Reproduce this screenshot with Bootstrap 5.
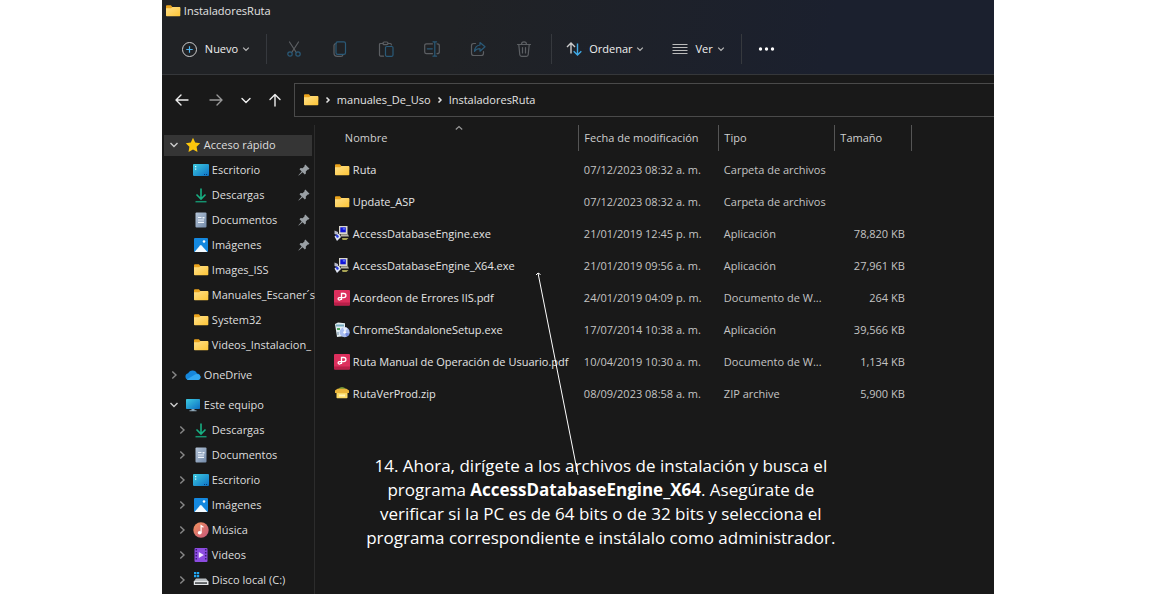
<!DOCTYPE html>
<html lang="es">
<head>
<meta charset="utf-8">
<meta name="viewport" content="width=device-width, initial-scale=1">
<title>InstaladoresRuta</title>
<link href="https://cdn.jsdelivr.net/npm/bootstrap@5.3.0/dist/css/bootstrap.min.css" rel="stylesheet">
<style>
  body { background: #fff; font-family: "Open Sans", "Noto Sans", sans-serif; }
  .explorer { width: 72%; background: #191919; color: #e4e4e4; font-size: 11px; line-height: 16px; }
  .explorer svg { display: block; flex: none; }
  .ic { width: 16px; height: 16px; }
  .chev { width: 8px; height: 8px; fill: none; stroke: currentColor; stroke-width: 1.2; }
  .bare { background: none; border: 0; padding: 0; color: inherit; display: flex; align-items: center; justify-content: center; }

  .top-area { background: linear-gradient(100deg, #202225 35%, #1b202e 80%); border-bottom: 1px solid #35373a; }
  .caption-bar { height: 22px; padding-left: 3px; gap: 3px; }
  .commands { height: 52px; padding: 2px 0 0 5px; }
  .commands .bare { height: 32px; }
  .tool-group { margin: 0 4px; }
  .tool { width: 46px; }
  .tool svg, .nav-btn svg { fill: none; stroke: #5c5f63; stroke-width: 1.2; stroke-linecap: round; stroke-linejoin: round; }
  .tool .blue { stroke: #2a5a78; }
  .split { width: 1px; height: 30px; background: #36393e; }
  .menu-btn { color: #f0f0f0; gap: 4px; margin-left: 14px; }
  .menu-btn + .menu-btn { margin-left: 28px; }
  .menu-btn svg:first-child { margin-right: 3px; }
  .menu-btn .chev { color: #bbb; }

  .address-row { height: 50px; padding-top: 8px; }
  .history { gap: 12px; padding: 0 4px 8px 12px; }
  .history .first { margin-right: 6px; }
  .nav-btn svg { stroke: #eee; stroke-width: 1.4; }
  .nav-btn.dim svg { stroke: #999; }
  .path-box { border: 1px solid #4a4a4a; border-right: 0; height: 34px; padding-left: 8px; gap: 5px; }
  .path-box .chev { stroke-width: 1.5; }
  .path-box a, .tree a { color: inherit; text-decoration: none; }

  .tree { width: 153px; flex: none; border-right: 1px solid #2c2c2c; padding: 8px 2px 0; }
  .tree ul { list-style: none; padding: 0; margin: 0; }
  .tree-group { margin-bottom: 6px; }
  .tree-row { height: 24px; display: flex; align-items: center; padding-left: 1px; color: #dedede; }
  .tree-row .bare { width: 18px; height: 20px; color: #888; flex: none; }
  .tree-row .bare.open { color: #ccc; }
  .tree-row .chev { stroke-width: 1.4; }
  .tree-row a { display: flex; align-items: center; gap: 3px; min-width: 0; flex: 1; margin-left: 2px; white-space: nowrap; }
  .tree-row.active { background: linear-gradient(#353535, #353535) center / 100% 21px no-repeat; }
  .tree ul .tree-row { height: 25px; padding-left: 9px; }
  .tree ul .leaf { padding-left: 27px; }
  .pin { width: 12px; height: 12px; fill: #9aa0a5; margin-right: 2px; }

  .file-list { table-layout: fixed; width: 100%; border-collapse: collapse; color: #c4c4c4; }
  .file-list th { font-weight: 400; height: 26px; padding: 0 5px; border-right: 1px solid #555; color: #cfcfcf; }
  .file-list th:last-child { border: 0; }
  .file-list th:first-child { padding-left: 30px; }
  .file-list tbody::before { content: ""; display: block; height: 3px; }
  .file-list td { height: 32px; padding: 0 7px 0 5px; white-space: nowrap; }
  .file-list td:first-child { padding: 0 0 0 19px; color: #e4e4e4; }
  .file-name { gap: 3px; }
  .file-list .size-cell { text-align: right; }
  .sort-mark { top: -1px; left: 140px; color: #999; }
  .c-name { width: 264px; } .c-date { width: 140px; } .c-type { width: 116px; } .c-size { width: 77px; }

  .callout-text { font-size: 17px; line-height: 24px; color: #fff; width: 484px; max-width: 100%; margin: 44px 0 0 44px; text-align: center; }
  .pointer { left: 219px; top: 147px; width: 48px; height: 206px; pointer-events: none; }
</style>
</head>
<body>
<svg width="0" height="0" class="position-absolute" aria-hidden="true">
  <defs>
    <linearGradient id="gFolder" x1="0" y1="0" x2="1" y2="1"><stop offset="0" stop-color="#ffe08a"/><stop offset="1" stop-color="#fdc536"/></linearGradient>
    <linearGradient id="gDesk" x1="0" y1="0" x2="1" y2="1"><stop offset="0" stop-color="#3ecbe0"/><stop offset="1" stop-color="#0c6fc4"/></linearGradient>
    <linearGradient id="gMusic" x1="0" y1="0" x2="1" y2="1"><stop offset="0" stop-color="#f2935c"/><stop offset="1" stop-color="#c4557c"/></linearGradient>
    <linearGradient id="gDoc" x1="0" y1="0" x2="1" y2="1"><stop offset="0" stop-color="#b5c5d8"/><stop offset="1" stop-color="#7289a8"/></linearGradient>
    <symbol id="folder" viewBox="0 0 16 16"><path d="M1 3.2q0-.9.9-.9h4l1.5 1.6h7q.8 0 .8.8V8H1z" fill="#eaa31c"/><path d="M1 5.2h5.2l1.3-1.1h7q.8 0 .8.8v7.500q0 .8-.8.8H1.800q-.8 0-.8-.8z" fill="url(#gFolder)"/></symbol>
    <symbol id="star" viewBox="0 0 16 16"><path d="M8 .8l2.200 4.700 5 .7-3.600 3.600.9 5.200L8 12.500 3.500 15l.9-5.200L.8 6.200l5-.7z" fill="#fdc70c"/></symbol>
    <symbol id="desk" viewBox="0 0 16 16"><rect x="0" y="2" width="16" height="12" rx="1" fill="url(#gDesk)"/><path d="M2 4h1.300v1.300H2zM2 6.500h1.300v1.300H2z" fill="#d6fbff"/><path d="M11 12h1v1h-1zM13 12h1v1h-1z" fill="#063c76"/></symbol>
    <symbol id="down" viewBox="0 0 16 16"><path d="M8 1.500v10M3.500 7.500L8 12l4.500-4.500" fill="none" stroke="#17b083" stroke-width="1.600"/><path d="M2.500 14.700h11" stroke="#15926f" stroke-width="1.500"/></symbol>
    <symbol id="doc" viewBox="0 0 16 16"><rect x="2.500" y=".5" width="11" height="15" rx="1" fill="url(#gDoc)"/><path d="M5 5.500h3.500M5 8h6M5 10.300h6" stroke="#eef4fb" stroke-width="1.200"/><path d="M9.500 5h2v1.500h-2z" fill="#eef4fb"/></symbol>
    <symbol id="pic" viewBox="0 0 16 16"><rect x="1" y="1" width="14" height="14" rx="1" fill="#1488df"/><path d="M1.500 15l5.500-6.500q.8-.8 1.600 0l5.800 6.500z" fill="#f4fbff"/><circle cx="11" cy="4.500" r="1.300" fill="#fff"/></symbol>
    <symbol id="cloud" viewBox="0 0 16 16"><path d="M3.500 13a3.400 3.400 0 0 1-.4-6.700A4.800 4.800 0 0 1 12 6.500a3.300 3.300 0 0 1 .8 6.500z" fill="#1687db"/><path d="M3.500 13a3 3 0 0 1-1.700-.6L10 7.500a4 4 0 0 1 5.600 2.300A3 3 0 0 1 12.800 13z" fill="#32a7f0"/></symbol>
    <symbol id="pc" viewBox="0 0 16 16"><rect x="1" y="2" width="14" height="10" rx=".7" fill="url(#gDesk)"/><path d="M6.500 12h3v1.500h-3zM4.500 13.300h7v1h-7z" fill="#8ea7b8"/></symbol>
    <symbol id="music" viewBox="0 0 16 16"><circle cx="8" cy="8" r="7.700" fill="url(#gMusic)"/><ellipse cx="6.700" cy="10.700" rx="2" ry="1.700" fill="#fff"/><path d="M8.100 10.700V3.700l2.400 1.500" stroke="#fff" stroke-width="1.200" fill="none"/></symbol>
    <symbol id="video" viewBox="0 0 16 16"><rect x="1.500" y="1" width="13" height="14" rx="1" fill="#8c4be0"/><path d="M3.300 2v12M12.700 2v12" stroke="#3d1b7e" stroke-width="1.500" stroke-dasharray="1.600 1.400"/><path d="M5.800 5l5 3-5 3z" fill="#f1e6ff"/></symbol>
    <symbol id="disk" viewBox="0 0 16 16"><path d="M3 6.500h10l2.500 3H.8z" fill="#b9bec2"/><rect x=".8" y="9" width="14.700" height="4" rx=".6" fill="#e4e6e8"/><path d="M2 10.300h12v1.500H2z" fill="#3c4043"/><path d="M1 0h2.300v2.300H1zM3.900 0h2.300v2.300H3.900zM1 2.900h2.300v2.300H1zM3.900 2.900h2.300v2.300H3.900z" fill="#22a7f2"/></symbol>
    <symbol id="exe" viewBox="0 0 16 16"><path d="M5 0h8.500v8H5z" fill="#d9d6cb"/><path d="M6.300 1.300h5.500v5H6.300z" fill="#1014d8"/><path d="M8.800 1.700h2.300v2H8.800z" fill="#5468f5"/><path d="M6.500 8.300h7.500l1 2.200H7z" fill="#b9b6a8"/><path d="M.5 4.500l3.500 1.500v3l-3.500-1z" fill="#b8bac8"/><path d="M.5 10.500L5 7.500l2 3.500-4 4z" fill="#dfe4f3"/><path d="M1 8.500l3 .5 1 2-2 1z" fill="#2a3ede"/><path d="M8 12h6.500l-2 2H8.500z" fill="#a9a454"/></symbol>
    <symbol id="pdf" viewBox="0 0 16 16"><rect width="16" height="15.500" rx="1" fill="#dd2f5d"/><path d="M0 12.500h16v2q0 1-1 1H1q-1 0-1-1z" fill="#b91f49"/><path d="M7.500 10V3.500h2.300a2 2 0 0 1 0 4.200H5.300a1.200 1.200 0 1 0 1.200 1.300" fill="none" stroke="#fff" stroke-width="1.300"/></symbol>
    <symbol id="setup" viewBox="0 0 16 16"><path d="M1 2l3-1.500 7 .8V14l-8 1z" fill="#e2edf2"/><path d="M2 2.500h8v2H2z" fill="#76aac0"/><path d="M3 6h3v2H3z" fill="#4fa35d"/><path d="M3 10h2v3H3z" fill="#a8bccb"/><circle cx="10.700" cy="10.300" r="5" fill="#a9bdf0"/><path d="M10.700 10.300L9 5.600a5 5 0 0 1 4.500.6z" fill="#e9effd"/><path d="M10.700 10.300l4.700 1.500a5 5 0 0 1-3 3z" fill="#7389dd"/><circle cx="10.700" cy="10.300" r="1.400" fill="#f7f9ff"/></symbol>
    <symbol id="zip" viewBox="0 0 16 16"><path d="M4 3q4-4 8 0l1 2H3z" fill="#6f9436"/><path d="M1 4.500l2.500-1.700h9L15 4.500V7H1z" fill="#e9b43a"/><path d="M2.500 7h11v4.500q0 .8-.8.8H3.300q-.8 0-.8-.8z" fill="#fad965"/><path d="M5 8.500h6v2H5z" fill="#fff3b4"/></symbol>
    <symbol id="pinned" viewBox="0 0 12 12"><path d="M7.300.5l4.200 4.200-1 .8-.7-.1-2 2 .1 2-1.100 1.100L4.600 8.300.8 11.600l-.4-.4L3.700 7.400 1.500 5.200l1.100-1.100 2 .1 2-2-.1-.7z"/></symbol>
    <symbol id="v" viewBox="0 0 8 8"><path d="M1.200 2.700L4 5.500l2.800-2.800"/></symbol>
    <symbol id="vwide" viewBox="0 0 8 8"><path d="M.5 2L4 5.500 7.500 2"/></symbol>
    <symbol id="r" viewBox="0 0 8 8"><path d="M2.300.5L6 4 2.300 7.500"/></symbol>
    <symbol id="rsmall" viewBox="0 0 8 8"><path d="M2.500 1.500L5 4 2.500 6.500"/></symbol>
  </defs>
</svg>

<main class="explorer mx-auto min-vh-100 d-flex flex-column overflow-hidden">
  <header class="top-area">
    <div class="caption-bar d-flex align-items-center"><svg class="ic"><use href="#folder"/></svg><span>InstaladoresRuta</span></div>
    <div class="commands d-flex align-items-center">
      <button class="bare menu-btn" type="button"><svg width="17" height="17" viewBox="0 0 17 17" fill="none"><circle cx="8.500" cy="8.500" r="7" stroke="#ccc"/><path d="M8.500 5.300v6.400M5.300 8.500h6.400" stroke="#52b5f0" stroke-width="1.200"/></svg>Nuevo<svg class="chev"><use href="#v"/></svg></button>
      <span class="split ms-3"></span>
      <div class="tool-group d-flex">
        <button class="bare tool" type="button" aria-label="Cortar"><svg width="16" height="16" viewBox="0 0 16 16"><path d="M3.500 1l6.800 10.500M12.500 1L5.700 11.500"/><circle class="blue" cx="4" cy="13" r="2.200"/><circle class="blue" cx="12" cy="13" r="2.200"/></svg></button>
        <button class="bare tool" type="button" aria-label="Copiar"><svg width="16" height="16" viewBox="0 0 16 16"><path d="M4 2.500q-2 .3-2 2V12q0 3.300 3.300 3.300H9q1.700 0 2-1.700"/><rect class="blue" x="4" y=".8" width="9.500" height="12.500" rx="1.600"/></svg></button>
        <button class="bare tool" type="button" aria-label="Pegar"><svg width="16" height="16" viewBox="0 0 16 16"><path d="M5 2.500H2.500q-1 0-1 1V14q0 1.200 1.200 1.200H5.500M10 2.500h2.500q.8 0 .8 1V4"/><rect x="5" y="1" width="5" height="2.700" rx="1.200"/><rect class="blue" x="7.500" y="5.500" width="7.500" height="9.800" rx="1.200"/></svg></button>
        <button class="bare tool" type="button" aria-label="Cambiar nombre"><svg width="16" height="16" viewBox="0 0 16 16"><path d="M8.500 2.800h-6Q.7 2.800.7 4.500v6.500q0 1.700 1.800 1.700h6M13 2.800q2.300 0 2.300 1.700v6.500q0 1.700-2.300 1.700"/><path class="blue" d="M10.800.8v14.400M9 .8h3.600M9 15.200h3.600M3.300 7.800h5"/></svg></button>
        <button class="bare tool" type="button" aria-label="Compartir"><svg width="16" height="16" viewBox="0 0 16 16"><path d="M5.500 2.500H3.800q-2.300 0-2.300 2.200v7.500q0 2.300 2.300 2.300h7.400q2.300 0 2.300-2.300v-1.500"/><path class="blue" d="M10 1.500l5 4.300-5 4.400V7.700q-3.700 0-5.500 2.700Q5 4.500 10 4z"/></svg></button>
        <button class="bare tool" type="button" aria-label="Eliminar"><svg width="16" height="16" viewBox="0 0 16 16"><path d="M1.500 3.500h13M5.500 3.300q0-2.500 2.500-2.500t2.500 2.500M2.800 3.700l1 10q.2 1.600 1.700 1.600h5q1.500 0 1.700-1.600l1-10M6.500 6.500v5.500M9.500 6.500v5.500"/></svg></button>
      </div>
      <span class="split"></span>
      <button class="bare menu-btn" type="button"><svg width="16" height="16" viewBox="0 0 16 16" fill="none" stroke-width="1.400"><path d="M5 12.500V2M1 6l4-4 4 4" stroke="#ccc"/><path d="M11.500 2.500V14M7.700 10.200l3.800 3.800 3.800-3.800" stroke="#3fa9e6"/></svg>Ordenar<svg class="chev"><use href="#v"/></svg></button>
      <button class="bare menu-btn" type="button"><svg width="16" height="16" viewBox="0 0 16 16" stroke="#bbb"><path d="M.5 3.500h15M.5 6.500h15M.5 9.500h15M.5 12.500h15"/></svg>Ver<svg class="chev"><use href="#v"/></svg></button>
      <span class="split mx-3"></span>
      <button class="bare" type="button" aria-label="Ver más"><svg width="17" height="6" viewBox="0 0 17 6" fill="#fff"><circle cx="2.500" cy="3" r="1.700"/><circle cx="8.500" cy="3" r="1.700"/><circle cx="14.500" cy="3" r="1.700"/></svg></button>
    </div>
  </header>

  <div class="address-row d-flex align-items-start">
    <nav class="history d-flex align-items-center h-100" aria-label="Historial">
      <button class="bare nav-btn first" type="button" aria-label="Atrás"><svg width="16" height="14" viewBox="0 0 16 14"><path d="M14 7H2.500M7 2L2 7l5 5"/></svg></button>
      <button class="bare nav-btn dim me-1" type="button" aria-label="Adelante"><svg width="16" height="14" viewBox="0 0 16 14"><path d="M2 7h11.500M9 2l5 5-5 5"/></svg></button>
      <button class="bare nav-btn me-1" type="button" aria-label="Recientes"><svg width="12" height="14" viewBox="0 0 12 14"><path d="M2 5.500l4 4 4-4"/></svg></button>
      <button class="bare nav-btn" type="button" aria-label="Subir"><svg width="14" height="14" viewBox="0 0 14 14"><path d="M7 13V2M2 6.500l5-5 5 5"/></svg></button>
    </nav>
    <nav class="path-box d-flex align-items-center flex-grow-1 ms-2" aria-label="Ruta">
      <svg class="ic"><use href="#folder"/></svg>
      <svg class="chev"><use href="#rsmall"/></svg><a href="#">manuales_De_Uso</a>
      <svg class="chev"><use href="#rsmall"/></svg><a href="#">InstaladoresRuta</a>
    </nav>
  </div>

  <div class="d-flex flex-grow-1">
    <aside class="tree">
      <div class="tree-group">
        <div class="tree-row active"><button class="bare open" type="button" aria-label="Contraer"><svg class="chev"><use href="#vwide"/></svg></button><a href="#"><svg class="ic"><use href="#star"/></svg>Acceso rápido</a></div>
        <ul>
          <li class="tree-row leaf"><a href="#"><svg class="ic"><use href="#desk"/></svg>Escritorio</a><svg class="pin"><use href="#pinned"/></svg></li>
          <li class="tree-row leaf"><a href="#"><svg class="ic"><use href="#down"/></svg>Descargas</a><svg class="pin"><use href="#pinned"/></svg></li>
          <li class="tree-row leaf"><a href="#"><svg class="ic"><use href="#doc"/></svg>Documentos</a><svg class="pin"><use href="#pinned"/></svg></li>
          <li class="tree-row leaf"><a href="#"><svg class="ic"><use href="#pic"/></svg>Imágenes</a><svg class="pin"><use href="#pinned"/></svg></li>
          <li class="tree-row leaf"><a href="#"><svg class="ic"><use href="#folder"/></svg>Images_ISS</a></li>
          <li class="tree-row leaf"><a href="#"><svg class="ic"><use href="#folder"/></svg>Manuales_Escaner´s</a></li>
          <li class="tree-row leaf"><a href="#"><svg class="ic"><use href="#folder"/></svg>System32</a></li>
          <li class="tree-row leaf"><a href="#"><svg class="ic"><use href="#folder"/></svg>Videos_Instalacion_</a></li>
        </ul>
      </div>
      <div class="tree-group">
        <div class="tree-row"><button class="bare" type="button" aria-label="Expandir"><svg class="chev"><use href="#r"/></svg></button><a href="#"><svg class="ic"><use href="#cloud"/></svg>OneDrive</a></div>
      </div>
      <div>
        <div class="tree-row"><button class="bare open" type="button" aria-label="Contraer"><svg class="chev"><use href="#vwide"/></svg></button><a href="#"><svg class="ic"><use href="#pc"/></svg>Este equipo</a></div>
        <ul>
          <li class="tree-row"><button class="bare" type="button" aria-label="Expandir"><svg class="chev"><use href="#r"/></svg></button><a href="#"><svg class="ic"><use href="#down"/></svg>Descargas</a></li>
          <li class="tree-row"><button class="bare" type="button" aria-label="Expandir"><svg class="chev"><use href="#r"/></svg></button><a href="#"><svg class="ic"><use href="#doc"/></svg>Documentos</a></li>
          <li class="tree-row"><button class="bare" type="button" aria-label="Expandir"><svg class="chev"><use href="#r"/></svg></button><a href="#"><svg class="ic"><use href="#desk"/></svg>Escritorio</a></li>
          <li class="tree-row"><button class="bare" type="button" aria-label="Expandir"><svg class="chev"><use href="#r"/></svg></button><a href="#"><svg class="ic"><use href="#pic"/></svg>Imágenes</a></li>
          <li class="tree-row"><button class="bare" type="button" aria-label="Expandir"><svg class="chev"><use href="#r"/></svg></button><a href="#"><svg class="ic"><use href="#music"/></svg>Música</a></li>
          <li class="tree-row"><button class="bare" type="button" aria-label="Expandir"><svg class="chev"><use href="#r"/></svg></button><a href="#"><svg class="ic"><use href="#video"/></svg>Videos</a></li>
          <li class="tree-row"><button class="bare" type="button" aria-label="Expandir"><svg class="chev"><use href="#r"/></svg></button><a href="#"><svg class="ic"><use href="#disk"/></svg>Disco local (C:)</a></li>
        </ul>
      </div>
    </aside>

    <section class="position-relative flex-grow-1">
      <table class="file-list">
        <colgroup><col class="c-name"><col class="c-date"><col class="c-type"><col class="c-size"><col></colgroup>
        <thead>
          <tr><th class="position-relative" scope="col">Nombre<svg class="chev sort-mark position-absolute" viewBox="0 0 8 8"><path d="M.8 5.500L4 2.500l3.200 3"/></svg></th><th scope="col">Fecha de modificación</th><th scope="col">Tipo</th><th scope="col">Tamaño</th><th></th></tr>
        </thead>
        <tbody>
          <tr><td><div class="d-flex align-items-center file-name"><svg class="ic"><use href="#folder"/></svg>Ruta</div></td><td>07/12/2023 08:32 a. m.</td><td>Carpeta de archivos</td><td class="size-cell"></td><td></td></tr>
          <tr><td><div class="d-flex align-items-center file-name"><svg class="ic"><use href="#folder"/></svg>Update_ASP</div></td><td>07/12/2023 08:32 a. m.</td><td>Carpeta de archivos</td><td class="size-cell"></td><td></td></tr>
          <tr><td><div class="d-flex align-items-center file-name"><svg class="ic"><use href="#exe"/></svg>AccessDatabaseEngine.exe</div></td><td>21/01/2019 12:45 p. m.</td><td>Aplicación</td><td class="size-cell">78,820 KB</td><td></td></tr>
          <tr><td><div class="d-flex align-items-center file-name"><svg class="ic"><use href="#exe"/></svg>AccessDatabaseEngine_X64.exe</div></td><td>21/01/2019 09:56 a. m.</td><td>Aplicación</td><td class="size-cell">27,961 KB</td><td></td></tr>
          <tr><td><div class="d-flex align-items-center file-name"><svg class="ic"><use href="#pdf"/></svg>Acordeon de Errores IIS.pdf</div></td><td>24/01/2019 04:09 p. m.</td><td>Documento de W...</td><td class="size-cell">264 KB</td><td></td></tr>
          <tr><td><div class="d-flex align-items-center file-name"><svg class="ic"><use href="#setup"/></svg>ChromeStandaloneSetup.exe</div></td><td>17/07/2014 10:38 a. m.</td><td>Aplicación</td><td class="size-cell">39,566 KB</td><td></td></tr>
          <tr><td><div class="d-flex align-items-center file-name"><svg class="ic"><use href="#pdf"/></svg>Ruta Manual de Operación de Usuario.pdf</div></td><td>10/04/2019 10:30 a. m.</td><td>Documento de W...</td><td class="size-cell">1,134 KB</td><td></td></tr>
          <tr><td><div class="d-flex align-items-center file-name"><svg class="ic"><use href="#zip"/></svg>RutaVerProd.zip</div></td><td>08/09/2023 08:58 a. m.</td><td>ZIP archive</td><td class="size-cell">5,900 KB</td><td></td></tr>
        </tbody>
      </table>
      <p class="callout-text">14. Ahora, dirígete a los archivos de instalación y busca el programa <strong>AccessDatabaseEngine_X64</strong>. Asegúrate de verificar si la PC es de 64 bits o de 32 bits y selecciona el programa correspondiente e instálalo como administrador.</p>
      <svg class="pointer position-absolute" viewBox="0 0 48 206" fill="none" stroke="#fff"><path d="M4 1l40 202"/><path d="M2 3l2-2 2.500 1.500"/></svg>
    </section>
  </div>
</main>
<script src="https://cdn.jsdelivr.net/npm/bootstrap@5.3.0/dist/js/bootstrap.bundle.min.js"></script>
</body>
</html>
